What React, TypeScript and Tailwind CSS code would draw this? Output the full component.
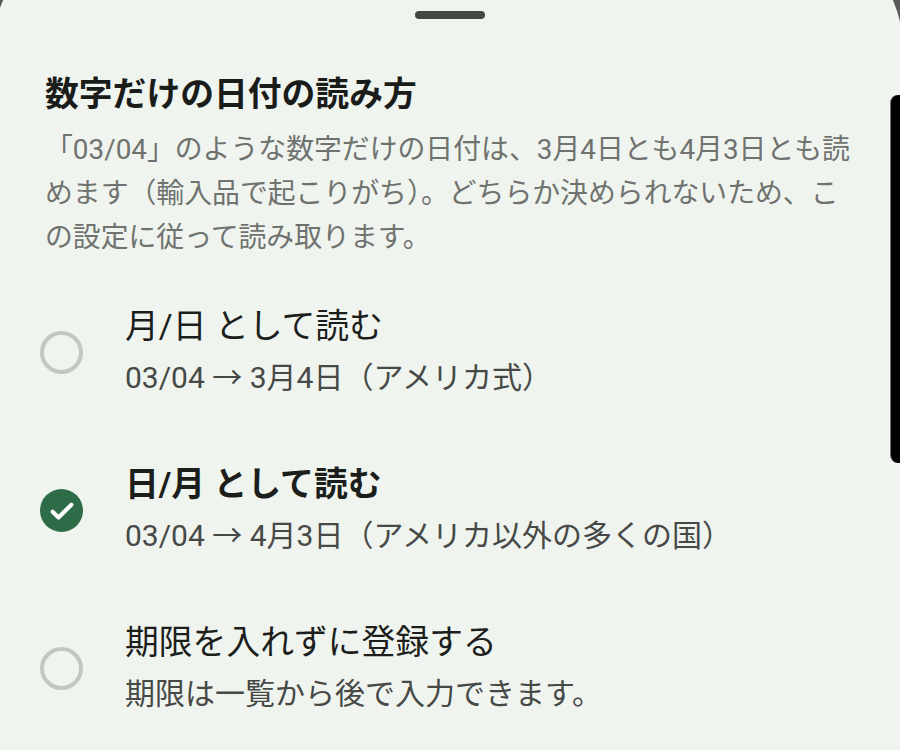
const font = { fontFamily: '"Roboto", "Noto Sans CJK JP", sans-serif' };

const options = [
  { title: "月/日 として読む", sub: "03/04 → 3月4日（アメリカ式）", checked: false },
  { title: "日/月 として読む", sub: "03/04 → 4月3日（アメリカ以外の多くの国）", checked: true },
  { title: "期限を入れずに登録する", sub: "期限は一覧から後で入力できます。", checked: false },
];

function Radio({ checked }: { checked: boolean }) {
  if (checked) {
    return (
      <div className="w-[43px] h-[43px] rounded-full bg-[#2e6b47] flex items-center justify-center shrink-0">
        <svg width="32" height="32" viewBox="0 0 24 24" fill="none">
          <path d="M5 12.6l4.4 4.3L19 7.3" stroke="white" strokeWidth="3.1" strokeLinecap="round" strokeLinejoin="round" />
        </svg>
      </div>
    );
  }
  return <div className="w-[43px] h-[43px] rounded-full border-[4px] border-[#c4c6c3] shrink-0" />;
}

export default function App() {
  return (
    <div className="relative w-[900px] h-[750px] overflow-hidden bg-[#585b58]" style={font}>
      {/* Bottom sheet */}
      <div className="w-[908px] h-[808px] -mt-[58px] -ml-[6px] rounded-t-[100px] bg-[#f0f4ef] pl-[46px] pr-[46px] flex flex-col">
        {/* Drag handle */}
        <div className="pt-[69px] flex justify-center">
          <div className="w-[70px] h-2 rounded-full bg-[#434843] ml-[4px]" />
        </div>

        <h1 className="mt-[54px] pl-[5px] text-[33.8px] leading-[43px] font-bold text-[#1a1c1a]">
          数字だけの日付の読み方
        </h1>

        <p className="mt-[12px] pl-[5px] text-[27.85px] leading-[44px] text-[#6f726e] whitespace-nowrap">
          <span className="block">「03/04」のような数字だけの日付は、3月4日とも4月3日とも読</span>
          <span className="block">めます（輸入品で起こりがち）。どちらか決められないため、こ</span>
          <span className="block">の設定に従って読み取ります。</span>
        </p>

        <div className="mt-[46px] flex flex-col gap-[65px]">
          {options.map((o) => (
            <div key={o.title} className="flex items-center gap-[42px]">
              <Radio checked={o.checked} />
              <div className="flex flex-col gap-[9px]">
                <div
                  className={
                    o.checked
                      ? "text-[33.8px] leading-[42px] font-bold text-[#1c1e1c] whitespace-nowrap"
                      : "text-[33.8px] leading-[42px] text-[#1c1e1c] whitespace-nowrap"
                  }
                >
                  {o.title}
                </div>
                <div className="text-[30px] leading-[42px] text-[#464946] whitespace-nowrap">{o.sub}</div>
              </div>
            </div>
          ))}
        </div>
      </div>

      {/* Edge bar overlay */}
      <div className="absolute right-0 top-[95px] w-[10px] h-[368px] bg-black rounded-l-[8px] border-l border-[#777]" />
    </div>
  );
}
